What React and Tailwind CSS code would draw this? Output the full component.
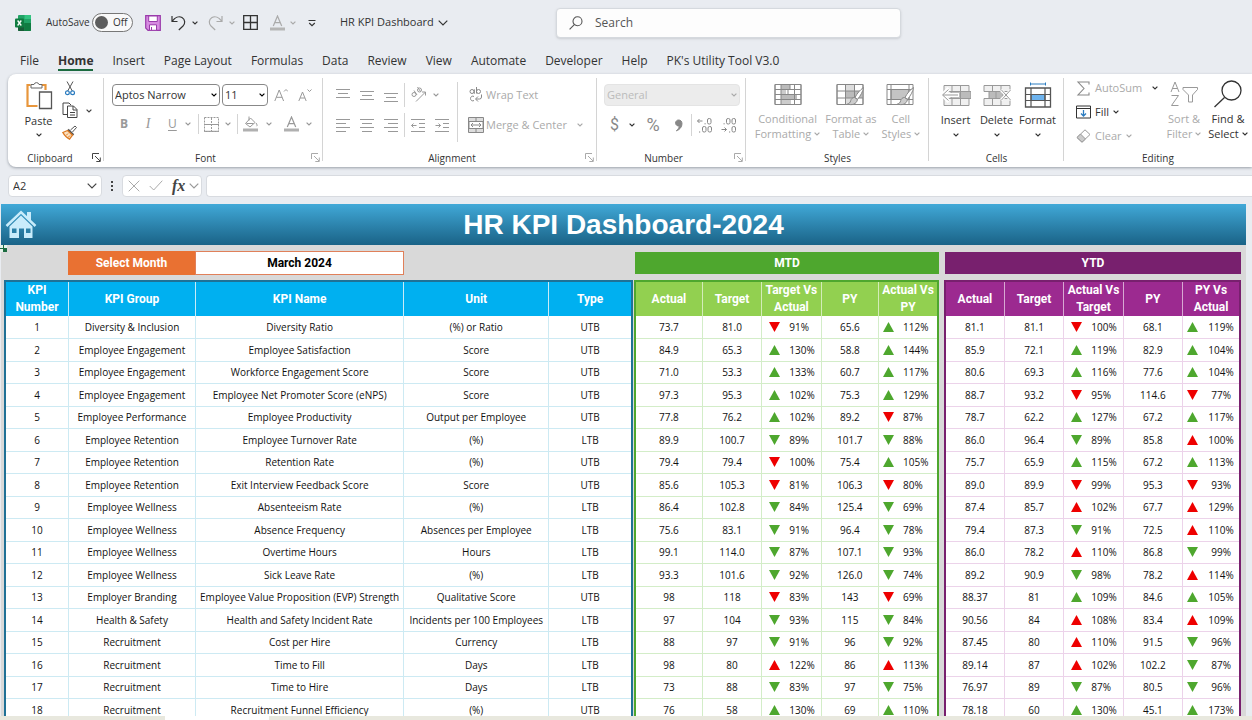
import { useState } from 'react';

const tabs = ['File', 'Home', 'Insert', 'Page Layout', 'Formulas', 'Data', 'Review', 'View', 'Automate', 'Developer', 'Help', "PK's Utility Tool V3.0"];

// [number, group, name, unit, type]
const kpis = [
  [1, 'Diversity & Inclusion', 'Diversity Ratio', '(%) or Ratio', 'UTB'],
  [2, 'Employee Engagement', 'Employee Satisfaction', 'Score', 'UTB'],
  [3, 'Employee Engagement', 'Workforce Engagement Score', 'Score', 'UTB'],
  [4, 'Employee Engagement', 'Employee Net Promoter Score (eNPS)', 'Score', 'UTB'],
  [5, 'Employee Performance', 'Employee Productivity', 'Output per Employee', 'UTB'],
  [6, 'Employee Retention', 'Employee Turnover Rate', '(%)', 'LTB'],
  [7, 'Employee Retention', 'Retention Rate', '(%)', 'UTB'],
  [8, 'Employee Retention', 'Exit Interview Feedback Score', 'Score', 'UTB'],
  [9, 'Employee Wellness', 'Absenteeism Rate', '(%)', 'LTB'],
  [10, 'Employee Wellness', 'Absence Frequency', 'Absences per Employee', 'LTB'],
  [11, 'Employee Wellness', 'Overtime Hours', 'Hours', 'LTB'],
  [12, 'Employee Wellness', 'Sick Leave Rate', '(%)', 'LTB'],
  [13, 'Employer Branding', 'Employee Value Proposition (EVP) Strength', 'Qualitative Score', 'UTB'],
  [14, 'Health & Safety', 'Health and Safety Incident Rate', 'Incidents per 100 Employees', 'LTB'],
  [15, 'Recruitment', 'Cost per Hire', 'Currency', 'LTB'],
  [16, 'Recruitment', 'Time to Fill', 'Days', 'LTB'],
  [17, 'Recruitment', 'Time to Hire', 'Days', 'LTB'],
  [18, 'Recruitment', 'Recruitment Funnel Efficiency', '(%)', 'UTB'],
];

// actual, target, trend, pct, py, trend, pct  (g/r = green/red, u/d = up/down)
const mtd = [
  ['73.7', '81.0', 'rd', '91%', '65.6', 'gu', '112%'],
  ['84.9', '65.3', 'gu', '130%', '58.8', 'gu', '144%'],
  ['71.0', '53.3', 'gu', '133%', '60.7', 'gu', '117%'],
  ['97.3', '95.3', 'gu', '102%', '75.3', 'gu', '129%'],
  ['77.8', '76.2', 'gu', '102%', '89.2', 'rd', '87%'],
  ['89.9', '100.7', 'gd', '89%', '101.7', 'gd', '88%'],
  ['79.4', '79.4', 'rd', '100%', '75.4', 'gu', '105%'],
  ['85.6', '105.3', 'rd', '81%', '106.3', 'rd', '80%'],
  ['86.4', '102.8', 'gd', '84%', '125.4', 'gd', '69%'],
  ['75.6', '83.1', 'gd', '91%', '96.4', 'gd', '78%'],
  ['99.1', '114.0', 'gd', '87%', '107.1', 'gd', '93%'],
  ['93.3', '101.6', 'gd', '92%', '126.0', 'gd', '74%'],
  ['98', '118', 'rd', '83%', '143', 'rd', '69%'],
  ['97', '104', 'gd', '93%', '115', 'gd', '84%'],
  ['88', '97', 'gd', '91%', '96', 'gd', '92%'],
  ['98', '80', 'ru', '122%', '86', 'ru', '113%'],
  ['73', '88', 'gd', '83%', '97', 'gd', '75%'],
  ['76', '58', 'gu', '130%', '69', 'gu', '110%'],
];

const ytd = [
  ['81.1', '81.1', 'rd', '100%', '68.1', 'gu', '119%'],
  ['85.9', '72.1', 'gu', '119%', '82.9', 'gu', '104%'],
  ['80.6', '69.3', 'gu', '116%', '77.6', 'gu', '104%'],
  ['88.7', '93.2', 'rd', '95%', '114.6', 'rd', '77%'],
  ['78.7', '62.2', 'gu', '127%', '67.2', 'gu', '117%'],
  ['86.0', '96.4', 'gd', '89%', '85.8', 'ru', '100%'],
  ['75.7', '65.9', 'gu', '115%', '67.2', 'gu', '113%'],
  ['89.0', '89.9', 'rd', '99%', '95.3', 'rd', '93%'],
  ['87.4', '85.7', 'ru', '102%', '67.7', 'ru', '129%'],
  ['79.4', '87.3', 'gd', '91%', '72.5', 'ru', '110%'],
  ['86.0', '78.2', 'ru', '110%', '86.8', 'gd', '99%'],
  ['89.2', '90.9', 'gd', '98%', '78.2', 'ru', '114%'],
  ['88.37', '81', 'gu', '109%', '84.6', 'gu', '105%'],
  ['90.56', '84', 'ru', '108%', '83.4', 'ru', '109%'],
  ['87.45', '80', 'ru', '110%', '91.5', 'gd', '96%'],
  ['89.14', '87', 'ru', '102%', '102.2', 'gd', '87%'],
  ['76.97', '89', 'gd', '87%', '80.5', 'gd', '96%'],
  ['78.18', '60', 'gu', '130%', '45.1', 'gu', '173%'],
];

const themes = {
  mtd: {
    border: 'border-[#4ea72e]',
    head: 'bg-[#92d050]',
    cell: 'border-[#d3edc8]',
    cols: ['w-[34px]', 'w-[30px]', 'w-[30px]', 'w-[29px]', 'w-[30px]'],
  },
  ytd: {
    border: 'border-[#78206e]',
    head: 'bg-[#9c2a90]',
    cell: 'border-[#ecd3ea]',
    cols: ['w-[30px]', 'w-[30px]', 'w-[30px]', 'w-[30px]', 'w-[29px]'],
  },
};

function Svg({ w = 16, h = 16, className = '', children }) {
  return (
    <svg width={w} height={h} viewBox={`0 0 ${w} ${h}`} fill="none" stroke="currentColor" strokeWidth="1" className={`shrink-0 ${className}`} aria-hidden="true">
      {children}
    </svg>
  );
}

function Chevron({ className = '' }) {
  return <Svg w={6} h={4} className={className}><path d="M.6.6 3 3 5.4.6" strokeWidth="1.2" /></Svg>;
}

function BigChevron({ className = '' }) {
  return <Svg w={10} h={6} className={className}><path d="M.7.7 5 5 9.3.7" strokeWidth="1.2" /></Svg>;
}

function Launcher({ label, className = '' }) {
  return (
    <button aria-label={label} className={`absolute right-[3px] bottom-[5px] ${className}`}>
      <Svg w={9} h={9}><path d="M.5 6V.5H7M3 3l5 5M8.3 4.5v4h-4" /></Svg>
    </button>
  );
}

function Group({ name, className, launcher, children }) {
  return (
    <section aria-label={name} className={`relative flex shrink-0 flex-col ${className}`}>
      <div className="h-[72px]">{children}</div>
      <div className="text-center text-[10px] leading-4 text-[#333]">{name}</div>
      {launcher && <Launcher label={`${name} settings`} className={launcher} />}
    </section>
  );
}

function Divider({ className = 'h-5' }) {
  return <div className={`w-px shrink-0 bg-[#d4d4d4] ${className}`} />;
}

function IconBtn({ label, className = '', children }) {
  return <button aria-label={label} className={`flex shrink-0 items-center justify-center ${className}`}>{children}</button>;
}

function ColorA({ bar = '#b0b0b0' }) {
  return (
    <Svg w={15} h={16}>
      <path d="M3.3 11 7.5 1l4.2 10M4.8 7.6h5.4" strokeWidth="1.2" />
      <rect x="0" y="12.5" width="15" height="3" fill={bar} stroke="none" />
    </Svg>
  );
}

function Lines({ rows }) {
  return (
    <Svg w={14} h={14}>
      {rows.map(([y, x1, x2]) => <path key={y} d={`M${x1} ${y}H${x2}`} strokeWidth="1.1" />)}
    </Svg>
  );
}

function TitleBar() {
  const [autoSave, setAutoSave] = useState(false);
  return (
    <header className="flex h-[45px] shrink-0 items-center text-[#333]">
      <div className="flex w-[556px] shrink-0 items-center pl-[15px]">
        <svg width="16" height="16" viewBox="0 0 16 16" className="mr-[15px] shrink-0" aria-hidden="true">
          <rect x="3" y="0" width="13" height="16" rx="1" fill="#21a366" />
          <path d="M9.500 0H15a1 1 0 0 1 1 1v3H9.500z" fill="#33c481" />
          <path d="M3 8h6.500v8H4a1 1 0 0 1-1-1z" fill="#185c37" />
          <path d="M9.500 8H16v7a1 1 0 0 1-1 1H9.500z" fill="#107c41" />
          <rect x="0" y="3.500" width="9" height="9" rx="1" fill="#107c41" />
          <path d="M2.600 5.500 6.300 10.500M6.300 5.500 2.600 10.500" stroke="#fff" strokeWidth="1.300" />
        </svg>
        <label htmlFor="autosave" className="w-[46px] text-[10px]">AutoSave</label>
        <button id="autosave" role="switch" aria-checked={autoSave} onClick={() => setAutoSave(!autoSave)} className="mr-3 flex h-[19px] w-[41px] items-center gap-[5px] rounded-full border border-[#777] bg-[#f9f9f9] pl-0.5">
          <span className="size-[13px] rounded-full bg-[#5d5d5d]" />
          <span className="text-[10px]">{autoSave ? 'On' : 'Off'}</span>
        </button>
        <IconBtn label="Save" className="mr-2.5">
          <svg width="16" height="16" viewBox="0 0 16 16" aria-hidden="true">
            <path d="M.7.7h14.600v14.600H3L.700 13z" fill="#d68be0" stroke="#9a3bab" strokeWidth="1.200" />
            <path d="M3.700 1h8.600v5.500H3.700z" fill="#fff" stroke="#9a3bab" />
            <path d="M4.500 15.300v-5.500h7v5.500z" fill="#fff" stroke="#9a3bab" />
            <path d="M6.500 12v3" stroke="#9a3bab" />
          </svg>
        </IconBtn>
        <IconBtn label="Undo" className="mr-2.5 gap-1.5">
          <Svg w={15} h={16}><path d="M1 1v5.500h5.500M1.300 6.200C4 2.500 8 .8 11 2.600c3.300 2 3.500 5.800 1 8.400L7.800 15" strokeWidth="1.200" /></Svg>
          <Chevron />
        </IconBtn>
        <IconBtn label="Redo" className="mr-2 gap-1.5 text-[#aaa]">
          <Svg w={15} h={16}><path d="M14 1v5.500H8.500M13.700 6.200C11 2.500 7 .8 4 2.600c-3.300 2-3.500 5.800-1 8.400L7.200 15" strokeWidth="1.200" /></Svg>
          <Chevron />
        </IconBtn>
        <IconBtn label="Borders" className="mr-3">
          <Svg w={15} h={15}><path d="M.7.7h13.600v13.600H.7zM7.500 1v13M1 7.500h13" strokeWidth="1.300" /></Svg>
        </IconBtn>
        <IconBtn label="Font Color" className="mr-3 gap-[5px] text-[#aaa]"><ColorA bar="#b5b5b5" /><Chevron /></IconBtn>
        <IconBtn label="Customize Quick Access Toolbar" className="mr-6">
          <Svg w={8} h={8}><path d="M.5 1.500h7M1.200 4 4 6.700 6.800 4" strokeWidth="1.100" /></Svg>
        </IconBtn>
        <button className="flex items-center gap-1 text-[11px] whitespace-nowrap">HR KPI Dashboard <BigChevron /></button>
      </div>
      <label className="flex h-[30px] w-[345px] items-center gap-3 rounded border border-[#d5d9de] bg-[#fdfdfd] px-3 shadow-sm">
        <Svg w={14} h={14} className="text-[#555]"><circle cx="8.500" cy="5.300" r="4.500" strokeWidth="1.100" /><path d="M5.300 8.700.600 13.400" strokeWidth="1.100" /></Svg>
        <input aria-label="Search" placeholder="Search" className="min-w-0 flex-1 text-xs outline-none placeholder:text-[#555]" />
      </label>
    </header>
  );
}

function RibbonTabs() {
  return (
    <nav className="flex h-[29px] shrink-0 items-start gap-[19px] pl-5 text-xs text-[#333]">
      {tabs.map((tab) => (
        <a key={tab} href="#" className={`h-[26px] pt-2 leading-4 whitespace-nowrap ${tab === 'Home' ? 'border-b-2 border-[#1b6b40] font-bold' : ''}`}>{tab}</a>
      ))}
    </nav>
  );
}

function ClipboardGroup() {
  return (
    <Group name="Clipboard" className="w-24 pr-3" launcher="text-[#444]">
      <div className="flex gap-2.5 pl-[17px]">
        <button className="flex w-[27px] flex-col items-center text-[11px] leading-4 text-[#333]">
          <Svg w={28} h={30} className="mt-0.5">
            <path d="M5.500 5H2.500v21h10" stroke="#e8963c" strokeWidth="2.200" />
            <path d="M17 5h3.500v5" stroke="#e8963c" strokeWidth="2.200" />
            <path d="M6 8V4.500h3a2.600 2.600 0 0 1 5 0h3V8z" fill="#fff" stroke="#666" />
            <path d="M14.500 12h12v16.500h-12z" fill="#fff" stroke="#555" strokeWidth="1.300" />
          </Svg>
          <span className="mt-[3px]">Paste</span>
          <Chevron className="mt-1" />
        </button>
        <div className="flex flex-col gap-1.5 pt-[3px]">
          <IconBtn label="Cut" className="w-4">
            <Svg w={10} h={15} className="text-[#555]"><path d="M2 .5 7.300 10M8 .5 2.700 10" /><circle cx="2.400" cy="11.800" r="1.900" stroke="#2b7cc0" strokeWidth="1.200" /><circle cx="7.600" cy="11.800" r="1.900" stroke="#2b7cc0" strokeWidth="1.200" /></Svg>
          </IconBtn>
          <IconBtn label="Copy" className="gap-2 text-[#444]">
            <Svg w={16} h={17}><path d="M5 12.500H1V1h6l2 2" /><path d="M5.500 4h6L15 7.500v8H5.500z" fill="#fff" /><path d="M11 4v4h4M8 10.500h5M8 13h5" /></Svg>
            <Chevron />
          </IconBtn>
          <IconBtn label="Format Painter" className="w-4">
            <Svg w={16} h={15}><path d="m8.500 5 4.500-4 1.500 1.500-4 4.500" stroke="#555" /><path d="m6 4.500 5.500 5.500" stroke="#555" strokeWidth="2" /><path d="M5.500 5.500.800 7.500c2 3.500 4 5.500 6.700 6.700l3-4z" fill="#fbe0bf" stroke="#dd7a22" strokeWidth="1.300" /><path d="m4 10.500 2-2M6 12.500l2-2" stroke="#dd7a22" /></Svg>
          </IconBtn>
        </div>
      </div>
    </Group>
  );
}

function FontGroup() {
  const box = 'block h-[22px] w-full appearance-none rounded border border-[#888] bg-white pl-0.5 text-[11px] text-[#333]';
  return (
    <Group name="Font" className="w-[219px] pr-4" launcher="text-[#aaa]">
      <div className="flex items-center gap-0.5 pt-1.5 pl-2">
        <div className="relative w-[108px] shrink-0">
          <select aria-label="Font name" className={box}><option>Aptos Narrow</option></select>
          <Chevron className="pointer-events-none absolute top-[9px] right-[3px]" />
        </div>
        <div className="relative w-[46px] shrink-0">
          <select aria-label="Font size" className={box}><option>11</option></select>
          <Chevron className="pointer-events-none absolute top-[9px] right-[3px]" />
        </div>
        <IconBtn label="Increase Font Size" className="ml-1 text-[#999]">
          <Svg w={14} h={14}><path d="M.8 13 5.200 2 9.600 13M2.300 9.300h5.800M10 3.500 12 1.500l2 2" /></Svg>
        </IconBtn>
        <IconBtn label="Decrease Font Size" className="ml-2 text-[#999]">
          <Svg w={14} h={14}><path d="M.8 13 4.500 4 8.200 13M2.100 10h4.800M9.500 1.500l2 2 2-2" /></Svg>
        </IconBtn>
      </div>
      <div className="flex items-center pt-2 pl-3 text-xs text-[#999]">
        <IconBtn label="Bold" className="mr-2 w-4 font-bold">B</IconBtn>
        <IconBtn label="Italic" className="mr-2 w-4 font-[Liberation_Serif] text-sm italic">I</IconBtn>
        <IconBtn label="Underline" className="mr-[7px] gap-2 pl-1"><span className="underline underline-offset-2">U</span><Chevron /></IconBtn>
        <Divider className="mr-[5px] h-5" />
        <IconBtn label="Borders" className="mr-1.5 gap-1.5">
          <Svg w={15} h={15}><path d="M.5.5h14v14H.5zM7.500 1v13M1 7.500h13" strokeDasharray="2 1" /><path d="M0 14.300h15M0 7.500h15" /></Svg>
          <Chevron />
        </IconBtn>
        <Divider className="mr-[5px] h-5" />
        <IconBtn label="Fill Color" className="mr-3 gap-2">
          <Svg w={15} h={16}><path d="M2.500 7.500 7.500 2l4.500 4.500-5 4.500zM3.500 7.500h7M6 .5v4M13 7c1 1.500 1.500 2.500.6 3.200" /><rect y="12.500" width="15" height="3" fill="#b0b0b0" stroke="none" /></Svg>
          <Chevron />
        </IconBtn>
        <IconBtn label="Font Color" className="gap-[7px]"><ColorA /><Chevron /></IconBtn>
      </div>
    </Group>
  );
}

function AlignmentGroup() {
  const top = [[1.5, 0, 14], [5.5, 2, 12], [9.5, 0, 14]];
  const mid = [[3.500, 0, 14], [7.500, 2, 12], [11.500, 0, 14]];
  const bottom = [[5.500, 0, 14], [9.500, 2, 12], [13.500, 0, 14]];
  const left = [[1.500, 0, 14], [5.500, 0, 10], [9.500, 0, 14], [13.500, 0, 10]];
  const center = [[1.500, 0, 14], [5.500, 2, 12], [9.500, 0, 14], [13.500, 2, 12]];
  const right = [[1.500, 0, 14], [5.500, 4, 14], [9.500, 0, 14], [13.500, 4, 14]];
  return (
    <Group name="Alignment" className="w-[274px] pr-4" launcher="text-[#aaa]">
      <div className="flex gap-2.5 pl-[13px] text-[#999]">
        <div className="flex w-[111px] flex-col gap-1.5 pt-[5px]">
          <div className="flex h-6 items-center gap-2.5">
            <IconBtn label="Top Align"><Lines rows={top} /></IconBtn>
            <IconBtn label="Middle Align"><Lines rows={mid} /></IconBtn>
            <IconBtn label="Bottom Align"><Lines rows={bottom} /></IconBtn>
            <Divider className="-ml-1 h-6" />
            <IconBtn label="Orientation" className="-ml-1 gap-1.5">
              <Svg w={16} h={16}>
                <circle cx="3" cy="7.500" r="2" /><path d="M3 3.500 6 8M6.500 0l3 4.500" /><circle cx="8.500" cy="3" r="2" /><path d="M5 14.500 14.500 5M11 5h3.500v3.500" />
              </Svg>
              <Chevron />
            </IconBtn>
          </div>
          <div className="flex h-6 items-center gap-2.5">
            <IconBtn label="Align Left"><Lines rows={left} /></IconBtn>
            <IconBtn label="Center"><Lines rows={center} /></IconBtn>
            <IconBtn label="Align Right"><Lines rows={right} /></IconBtn>
            <Divider className="-ml-1 h-6" />
            <IconBtn label="Decrease Indent" className="-ml-1"><Svg w={14} h={14}><path d="M0 1.500h14M8 5.500h6M8 9.500h6M0 13.500h14M.5 7.500h5M2.500 5.500l-2 2 2 2" /></Svg></IconBtn>
            <IconBtn label="Increase Indent"><Svg w={14} h={14}><path d="M0 1.500h14M8 5.500h6M8 9.500h6M0 13.500h14M.5 7.500h5M3.500 5.500l2 2-2 2" /></Svg></IconBtn>
          </div>
        </div>
        <Divider className="mt-1 h-[60px]" />
        <div className="flex flex-col gap-1.5 pt-[5px] text-[11px] whitespace-nowrap text-[#aaa]">
          <button className="flex h-6 items-center gap-0.5">
            <Svg w={16} h={16} className="text-[#888]">
              <circle cx="4" cy="4.500" r="2" /><path d="M6.300 2.300v4.500M8.500 0v6.500" /><circle cx="10.500" cy="4.500" r="2" />
              <path d="M6 9.500c-1.500-1-3.500 0-3.500 2s2 3 3.500 2M13.500 7.500v2.500a2 2 0 0 1-2 2H8M10 9.500 7.500 12l2.500 2.500" />
            </Svg>
            Wrap Text
          </button>
          <button className="flex h-6 items-center gap-0.5">
            <Svg w={16} h={16} className="text-[#888]">
              <path d="M.5.5h15v15H.5z" fill="#ddd" /><path d="M1 4.500h14v7H1z" fill="#fff" /><path d="M8 .5v4M8 11.500v4M3 8h10M5 6 3 8l2 2M11 6l2 2-2 2" />
            </Svg>
            Merge &amp; Center <Chevron className="ml-2" />
          </button>
        </div>
      </div>
    </Group>
  );
}

function NumberGroup() {
  return (
    <Group name="Number" className="w-[149px] pr-4" launcher="text-[#aaa]">
      <div className="pt-1.5 pl-[7px]">
        <div className="relative w-[136px]">
          <select aria-label="Number format" disabled className="block h-[22px] w-full appearance-none rounded border border-[#e4e4e4] bg-[#ececec] pl-0.5 text-[11px] text-[#bbb] opacity-100"><option>General</option></select>
          <Chevron className="pointer-events-none absolute top-[9px] right-[3px] text-[#aaa]" />
        </div>
      </div>
      <div className="mt-[7px] flex h-6 items-center pl-[13px] text-[#888]">
        <IconBtn label="Accounting Number Format" className="mr-2 gap-2.5 font-[Roboto] text-base"><span>$</span><Chevron className="text-[#333]" /></IconBtn>
        <IconBtn label="Percent Style" className="mr-3 w-5 font-[Roboto] text-lg">%</IconBtn>
        <IconBtn label="Comma Style" className="mr-2"><Svg w={8} h={13}><path d="M3.800 1a3 3 0 1 0 .5 5.900C4 9 3 10.500 1.300 11.800c3.500-1 5.700-3.800 5.700-7.200C7 2.500 5.600 1 3.800 1z" fill="currentColor" /></Svg></IconBtn>
        <Divider className="mr-[5px] h-[22px]" />
        <IconBtn label="Increase Decimal" className="mr-2">
          <Svg w={16} h={15}><path d="M5.500 3h-5M2.500 1l-2 2 2 2" /><rect x="10.500" y=".5" width="3.500" height="5.500" rx="1.500" /><rect x="5.500" y="8.500" width="3.500" height="5.500" rx="1.500" /><rect x="11" y="8.500" width="3.500" height="5.500" rx="1.500" /><path d="M2 14h1.200M7.500 5.800h1.200" /></Svg>
        </IconBtn>
        <IconBtn label="Decrease Decimal">
          <Svg w={16} h={15}><path d="M.5 11.500h5M3.500 9.500l2 2-2 2" /><rect x="5.500" y=".5" width="3.500" height="5.500" rx="1.500" /><rect x="11" y=".5" width="3.500" height="5.500" rx="1.500" /><rect x="11" y="8.500" width="3.500" height="5.500" rx="1.500" /><path d="M2.500 5.800h1.200M8 14h1.200" /></Svg>
        </IconBtn>
      </div>
    </Group>
  );
}

function Brush() {
  return (
    <>
      <path d="M27.500 5.500c-3.500 2.500-6.500 6-8.500 10l2.500 1.800c3-3.500 5.300-7.500 6-11.800z" fill="#fff" stroke="#888" />
      <path d="M18.500 15.500c-2 0-3.300 1.200-3.800 3.200-.5 2-1.500 2.800-3.200 3.300 4 1.500 9 .5 10-4.500z" fill="#ccc" stroke="#888" />
    </>
  );
}

function BigButton({ lines, icon, className = '' }) {
  return (
    <button className={`flex flex-col items-center text-[11px] leading-[15px] whitespace-nowrap ${className}`}>
      {icon}
      <span className="mt-[3px]">{lines[0]}</span>
      <span className="flex min-h-[15px] items-center gap-[3px]">{lines[1]}<Chevron /></span>
    </button>
  );
}

function StylesGroup() {
  return (
    <Group name="Styles" className="w-[183px]">
      <div className="flex justify-center gap-[5px] pt-1 text-[#aaa]">
        <BigButton lines={['Conditional', 'Formatting']} icon={
          <Svg w={28} h={26} className="text-[#888]">
            <path d="M1 2.500h26v20H1z" fill="#fff" /><path d="M7 2.500h9v5H7zM7 12.500h16v5H7z" fill="#bbb" stroke="none" /><path d="M7 7.500h5v5H7zM7 17.500h10v5H7z" fill="#ccc" stroke="none" />
            <path d="M1 2.500h26v20H1zM1 7.500h26M1 12.500h26M1 17.500h26M7 2.500v20M16 2.500v5M14 7.500v5M20.500 2.500v20" />
          </Svg>
        } />
        <BigButton lines={['Format as', 'Table']} icon={
          <Svg w={30} h={26} className="text-[#888]">
            <path d="M1 2.500h26v20H1z" fill="#fff" /><path d="M9.500 2.500h9v20h-9z" fill="#ddd" stroke="none" /><path d="M9.500 9h17v7H9.500z" fill="#bbb" stroke="none" />
            <path d="M1 2.500h26v20H1zM1 9h26M1 16h26M9.500 2.500v20M18.500 2.500v20" /><Brush />
          </Svg>
        } />
        <BigButton lines={['Cell', 'Styles']} icon={
          <Svg w={30} h={26} className="text-[#888]">
            <path d="M1 2.500h26v20H1z" fill="#fff" /><path d="M5 7.500h18v10H5z" fill="#c4c4c4" /><path d="M5 2.500v20M23 2.500v20M1 7.500h26M1 17.500h26" /><Brush />
          </Svg>
        } />
      </div>
    </Group>
  );
}

function CellsGroup() {
  return (
    <Group name="Cells" className="w-[135px]">
      <div className="flex justify-center gap-[5px] pt-1 text-[#333]">
        <BigButton className="w-9" lines={['Insert', '']} icon={
          <Svg w={30} h={27} className="text-[#999]">
            <path d="M3 3.500h25v20H3z" fill="#f0f0f0" /><path d="M10 9.500h20v7H10z" fill="#bbb" /><path d="M3 9.500h25M3 16.500h25M11 3.500v6M19.500 3.500v20M11 16.500v7" /><path d="M8 6.500 1.500 13 8 19.500M2 13h16" stroke="#fff" strokeWidth="4" /><path d="M7.500 7.500 1.500 13l6 5.500M2 13h15" />
          </Svg>
        } />
        <BigButton className="w-9" lines={['Delete', '']} icon={
          <Svg w={30} h={27} className="text-[#999]">
            <path d="M2 3.500h26v6H2zM2 16.500h26v7H2z" fill="#f0f0f0" /><path d="M7 9.500h14v7H7z" fill="#bbb" /><path d="M10.500 3.500v6M19 3.500v6M10.500 16.500v7M19 16.500v7M14 9.500v7" /><path d="m19 8 10 10M29 8 19 18" stroke="#fff" strokeWidth="3" /><path d="m19.500 8 9 10M28.500 8l-9 10" />
          </Svg>
        } />
        <BigButton className="w-9" lines={['Format', '']} icon={
          <Svg w={28} h={27} className="text-[#555]">
            <path d="M6.500 2h15M6.500.5v3M21.500.5v3" stroke="#2b7cc0" /><path d="M1.500 6h25v19h-25z" fill="#fff" strokeWidth="1.300" /><path d="M7 12.500h14v6H7z" fill="#6db3ee" /><path d="M1.500 12.500h25M1.500 18.500h25M7 6v19M21 6v19" strokeWidth="1.200" />
          </Svg>
        } />
      </div>
    </Group>
  );
}

function EditingGroup() {
  return (
    <Group name="Editing" className="min-w-[188px] flex-1">
      <div className="flex pl-3 text-[#333]">
        <div className="flex w-[82px] flex-col gap-1 text-[11px] leading-4 text-[#333]">
          <button className="flex h-5 items-center gap-1 text-[#aaa]">
            <Svg w={15} h={15} className="text-[#888]"><path d="M13 3.500V1H2l6 6.500L2 14h11v-2.500" strokeWidth="1.100" /></Svg>
            AutoSum <Chevron className="ml-auto text-[#333]" />
          </button>
          <button className="flex h-5 items-center gap-1">
            <Svg w={15} h={14}><path d="M.5 1h14v12H.5zM.5 3.500h14" /><path d="M7.500 5v6M5 8.500 7.500 11 10 8.500" stroke="#2b7cc0" strokeWidth="1.300" /></Svg>
            Fill <Chevron />
          </button>
          <button className="flex h-5 items-center gap-1 text-[#aaa]">
            <Svg w={15} h={14} className="text-[#999]"><path d="M1 8.500 9 .8l5 4.700-8 7.700z" fill="#fff" /><path d="M1 8.500 4.500 5l5 5L6 13.200z" fill="#ccc" /></Svg>
            Clear <Chevron />
          </button>
        </div>
        <div className="flex gap-1 pt-0.5 pl-1.5">
          <BigButton className="w-10 text-[#aaa]" lines={['Sort &', 'Filter']} icon={
            <Svg w={28} h={28} className="text-[#999]"><path d="M1 12 5 2l4 10M2.500 8.500h5M1.500 15.500h7L1.500 25.500h7" /><path d="M13 7.500h14.500v2l-5 5.500v7h-4v-7L13 9.500z" /></Svg>
          } />
          <BigButton className="w-10" lines={['Find &', 'Select']} icon={
            <Svg w={30} h={28}><circle cx="18.500" cy="10.500" r="9.500" strokeWidth="1.300" /><path d="M11.500 17.500 1.500 27" strokeWidth="1.300" /></Svg>
          } />
        </div>
      </div>
    </Group>
  );
}

function Ribbon() {
  const sep = <Divider className="-ml-px h-[83px]" />;
  return (
    <div className="ml-2 flex h-[93px] shrink-0 overflow-hidden rounded-l-lg bg-white pt-1 shadow-[0_1px_3px_#9aa0a8]">
      <ClipboardGroup />{sep}
      <FontGroup />{sep}
      <AlignmentGroup />{sep}
      <NumberGroup />{sep}
      <StylesGroup />{sep}
      <CellsGroup />{sep}
      <EditingGroup />
    </div>
  );
}

function FormulaBar() {
  return (
    <div className="flex h-[37px] shrink-0 items-center pl-2 text-[#444]">
      <div className="relative w-[94px]">
        <input aria-label="Name Box" defaultValue="A2" className="block h-[22px] w-full rounded border border-[#d8dbe0] bg-white pl-1 text-[11px] text-[#333]" />
        <BigChevron className="pointer-events-none absolute top-2 right-[5px]" />
      </div>
      <Svg w={20} h={12}><path d="M9 1h2v2H9zM9 5h2v2H9zM9 9h2v2H9z" fill="currentColor" stroke="none" /></Svg>
      <div className="flex h-[22px] w-[80px] items-center gap-[9px] rounded border border-[#d8dbe0] bg-white pl-[5px]">
        <IconBtn label="Cancel"><Svg w={12} h={12} className="text-[#aaa]"><path d="m.7.700 10.600 10.600M11.300.7.700 11.300" /></Svg></IconBtn>
        <IconBtn label="Enter"><Svg w={14} h={11} className="text-[#aaa]"><path d="m.7 6 4 4L13.300.700" /></Svg></IconBtn>
        <IconBtn label="Insert Function" className="gap-1 font-[Liberation_Serif] text-base font-bold italic">fx <BigChevron className="text-[#999]" /></IconBtn>
      </div>
      <input aria-label="Formula Bar" className="ml-1 h-[22px] flex-1 rounded-l border border-r-0 border-[#d8dbe0] bg-white px-2 text-xs" />
    </div>
  );
}

function Trend({ kind }) {
  const color = kind[0] === 'g' ? 'fill-[#4ea72e]' : 'fill-[#ee0000]';
  return (
    <svg width="11" height="10" viewBox="0 0 11 10" className={`shrink-0 ${color}`} role="img" aria-label={kind[1] === 'u' ? 'up' : 'down'}>
      <path d={kind[1] === 'u' ? 'M5.500 0 11 10H0z' : 'M0 0h11l-5.500 10z'} />
    </svg>
  );
}

function KpiTable() {
  return (
    <table className="h-[442px] w-full table-fixed border-2 border-[#1f7196] bg-white text-center">
      <colgroup>
        <col className="w-[32px]" /><col className="w-[64px]" /><col className="w-[105px]" /><col className="w-[73px]" /><col className="w-[42px]" />
      </colgroup>
      <thead>
        <tr className="h-[34px] bg-[#00b0f0] text-xs text-white">
          {['KPI Number', 'KPI Group', 'KPI Name', 'Unit', 'Type'].map((h) => (
            <th key={h} className="border-r border-[#c8ebf7] px-1 leading-[17px] last:border-r-0">{h}</th>
          ))}
        </tr>
      </thead>
      <tbody className="font-[Open_Sans] text-[10px] leading-4 text-[#111]">
        {kpis.map((row) => (
          <tr key={row[0]} className="h-[22px]">
            {row.map((cell, i) => (
              <td key={i} className="border-r border-b border-[#cdeaf3] whitespace-nowrap last:border-r-0">{cell}</td>
            ))}
          </tr>
        ))}
      </tbody>
    </table>
  );
}

function PeriodTable({ headers, rows, theme, centerLast }) {
  const td = `border-r border-b last:border-r-0 ${theme.cell}`;
  return (
    <table className={`h-[442px] w-full table-fixed border-2 bg-white text-center ${theme.border}`}>
      <colgroup>
        {theme.cols.map((w, i) => <col key={i} className={w} />)}
      </colgroup>
      <thead>
        <tr className={`h-[34px] text-xs text-white ${theme.head}`}>
          {headers.map((h) => <th key={h} className="border-r border-white/60 leading-[17px] last:border-r-0">{h}</th>)}
        </tr>
      </thead>
      <tbody className="font-[Open_Sans] text-[10px] leading-4 text-[#111]">
        {rows.map(([actual, target, t1, p1, py, t2, p2], i) => (
          <tr key={i} className="h-[22px]">
            <td className={td}>{actual}</td>
            <td className={td}>{target}</td>
            <td className={td}>
              <div className="flex items-center gap-[9px] pl-[7px]"><Trend kind={t1} />{p1}</div>
            </td>
            <td className={td}>{py}</td>
            <td className={td}>
              <div className="flex items-center gap-[9px] pl-1">
                <Trend kind={t2} />
                <span className={centerLast ? 'w-7 text-center' : ''}>{p2}</span>
              </div>
            </td>
          </tr>
        ))}
      </tbody>
    </table>
  );
}

function Sheet() {
  return (
    <main className="flex min-h-0 flex-1 overflow-hidden pl-px font-[Roboto,sans-serif]">
      <div className="min-w-0 flex-1 bg-[#d9d9d9]">
        <div className="flex h-[41px] items-center bg-linear-to-b from-[#41a9d8] to-[#1a6387]">
          <a href="#" aria-label="Home" className="w-10 pl-1">
            <svg width="32" height="29" viewBox="0 0 32 29" aria-hidden="true">
              <path d="M22 2h4v9l-4-4z" fill="#c9ecfb" />
              <path d="M1.500 16 16 2.200 30.500 16" fill="none" stroke="#c9ecfb" strokeWidth="2.500" />
              <path d="M4.500 16.500 16 5.500l11.500 11V28H19v-9.500h-5V28H4.500z" fill="#c9ecfb" />
              <path d="M7 18.500h4.500V23H7zM21 18.500h4.500V23H21z" fill="#2a80a8" />
            </svg>
          </a>
          <h1 className="flex-1 pr-10 text-center font-[Liberation_Sans,sans-serif] text-[28px] font-bold text-white">HR KPI Dashboard-2024</h1>
        </div>

        <div className="grid grid-cols-[629fr_309fr_297fr] gap-x-px pr-[5px] pl-[3px]">
          {/* month selector and period captions */}
          <div className="mt-1.5 mb-[5px] grid h-6 grid-cols-[64fr_127fr_209fr_229fr] text-xs font-bold">
            <svg width="7" height="7" viewBox="0 0 7 7" className="-mt-1.5 -ml-1" aria-hidden="true">
              <path d="M0 0h7v7H0z" fill="#1b6b40" /><path d="M0 0h3v3H0zM0 4h3v3H0zM4 0h3v3H4z" fill="#e8f3ec" />
            </svg>
            <div className="flex items-center justify-center bg-[#e97132] text-white">Select Month</div>
            <div className="flex items-center justify-center border border-[#e0805a] bg-white text-black">March 2024</div>
          </div>
          <div className="mt-[7px] mr-1 mb-1.5 ml-px flex h-[22px] items-center justify-center bg-[#4ea72e] text-xs font-bold text-white">MTD</div>
          <div className="mt-[7px] mb-1.5 ml-px flex h-[22px] items-center justify-center bg-[#78206e] text-xs font-bold text-white">YTD</div>

          <KpiTable />
          <div className="pr-1">
            <PeriodTable headers={['Actual', 'Target', 'Target Vs Actual', 'PY', 'Actual Vs PY']} rows={mtd} theme={themes.mtd} />
          </div>
          <PeriodTable headers={['Actual', 'Target', 'Actual Vs Target', 'PY', 'PY Vs Actual']} rows={ytd} theme={themes.ytd} centerLast />
        </div>
      </div>
      <div className="w-1.5 bg-[#e9edf1]" />
    </main>
  );
}

export default function App() {
  return (
    <div className="flex h-screen min-w-0 flex-col overflow-hidden bg-[#e9ecf1] font-['Open_Sans',sans-serif]">
      <TitleBar />
      <RibbonTabs />
      <Ribbon />
      <FormulaBar />
      <Sheet />
      <footer className="flex h-1 shrink-0 bg-[#e8e8de]">
        <div className="ml-[165px] w-[104px] bg-white" />
      </footer>
    </div>
  );
}
